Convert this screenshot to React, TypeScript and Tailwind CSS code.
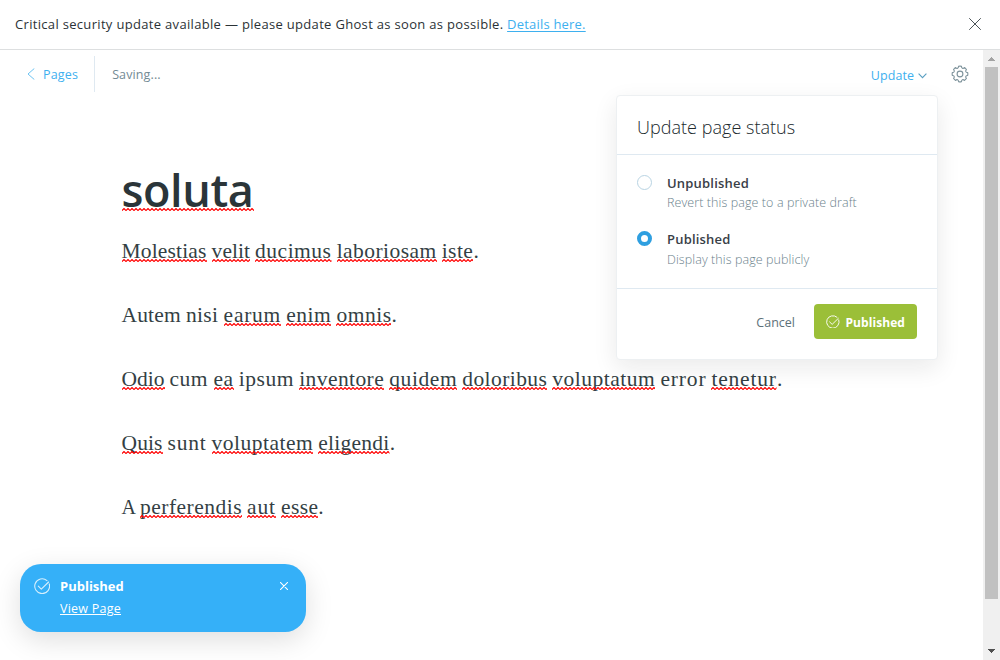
type Word = { text: string; cls: string; ok?: boolean; stop?: boolean };

const paragraphs: Word[][] = [
  [
    { text: "Molestias", cls: "w-[85px] tracking-[0.16px]" },
    { text: "velit", cls: "w-[38.5px] tracking-[0.08px]" },
    { text: "ducimus", cls: "w-[76.5px] tracking-[0.5px]" },
    { text: "laboriosam", cls: "w-[100px] tracking-[0.45px]" },
    { text: "iste", cls: "w-[31.7px] tracking-[0.45px]", stop: true },
  ],
  [
    { text: "Autem", cls: "w-[59.5px] tracking-[0.15px]", ok: true },
    { text: "nisi", cls: "w-[32.5px] tracking-[0.3px]", ok: true },
    { text: "earum", cls: "w-[57.5px] tracking-[0.75px]" },
    { text: "enim", cls: "w-[45.3px] tracking-[0.55px]" },
    { text: "omnis", cls: "w-[55px] tracking-[0.5px]", stop: true },
  ],
  [
    { text: "Odio", cls: "w-[43px]" },
    { text: "cum", cls: "w-[39px] tracking-[0.5px]", ok: true },
    { text: "ea", cls: "w-[20px] tracking-[0.45px]" },
    { text: "ipsum", cls: "w-[55.5px] tracking-[0.55px]", ok: true },
    { text: "inventore", cls: "w-[85px] tracking-[0.42px]" },
    { text: "quidem", cls: "w-[68px] tracking-[0.58px]" },
    { text: "doloribus", cls: "w-[85px] tracking-[0.42px]" },
    { text: "voluptatum", cls: "w-[103px] tracking-[0.5px]" },
    { text: "error", cls: "w-[46px] tracking-[0.85px]", ok: true },
    { text: "tenetur", cls: "w-[65.5px] tracking-[0.8px]", stop: true },
  ],
  [
    { text: "Quis", cls: "w-[41px] tracking-[0.1px]" },
    { text: "sunt", cls: "w-[39px] tracking-[0.8px]", ok: true },
    { text: "voluptatem", cls: "w-[101.5px] tracking-[0.48px]" },
    { text: "eligendi", cls: "w-[71.5px] tracking-[0.27px]", stop: true },
  ],
  [
    { text: "A", cls: "w-[13.4px] text-[20px]", ok: true },
    { text: "perferendis", cls: "w-[102px] tracking-[0.5px]" },
    { text: "aut", cls: "w-[29px] tracking-[0.9px]" },
    { text: "esse", cls: "w-[37.3px] tracking-[0.4px]", stop: true },
  ],
];

function Squiggle({ className }: { className: string }) {
  return (
    <svg className={`absolute left-0 h-[3px] w-full ${className}`} aria-hidden="true">
      <defs>
        <pattern id="squiggle" width="4" height="3" patternUnits="userSpaceOnUse">
          <path d="M-1 1.5L0 2.5L2 .5L4 2.5L5 1.5" fill="none" stroke="#ff0000" strokeWidth="1.15" />
        </pattern>
      </defs>
      <rect width="100%" height="3" fill="url(#squiggle)" />
    </svg>
  );
}

function Cross({ className, width }: { className: string; width: number }) {
  return (
    <svg viewBox="0 0 12 12" className={className} fill="none" stroke="currentColor" strokeWidth={width} strokeLinecap="round">
      <path d="M.5.5l11 11M11.5.5l-11 11" />
    </svg>
  );
}

function CheckCircle({ className }: { className: string }) {
  return (
    <svg viewBox="0 0 16 16" className={className} fill="none" stroke="currentColor" strokeWidth="1.1" strokeLinecap="round" strokeLinejoin="round">
      <path d="M15.2 5.9A7.4 7.4 0 1 1 13 2.6" />
      <path d="M4.3 8.2l3 2.9L14.6 4" />
    </svg>
  );
}

function cogPath() {
  const at = (deg: number, r: number) => {
    const a = (deg * Math.PI) / 180;
    return `${(9 + r * Math.sin(a)).toFixed(2)} ${(9 - r * Math.cos(a)).toFixed(2)}`;
  };
  let d = `M${at(-11, 7.8)}`;
  for (let k = 0; k < 8; k++) {
    const t = k * 45;
    d += `Q${at(t, 8.1)} ${at(t + 11, 7.8)}C${at(t + 13, 5.9)} ${at(t + 32, 5.9)} ${at(t + 34, 7.8)}`;
  }
  return d + "Z";
}

function Cog() {
  return (
    <svg viewBox="0 0 18 18" className="size-[18px] text-[#7d929b]" fill="none" stroke="currentColor" strokeWidth="1.1">
      <path d={cogPath()} strokeLinejoin="round" />
      <circle cx="9" cy="9" r="2.9" />
    </svg>
  );
}

function Option({ title, note, checked }: { title: string; note: string; checked?: boolean }) {
  return (
    <div className="flex gap-[15px]">
      <span
        className={
          checked
            ? "size-[15px] shrink-0 rounded-full border-[4px] border-[#2f9fe0] bg-white"
            : "size-[15px] shrink-0 rounded-full border border-[#b9d4e3] bg-white"
        }
      />
      <div>
        <div className="text-[13px] leading-[16px] font-semibold tracking-[0.2px] text-[#394047]">{title}</div>
        <div className={`text-[12.5px] leading-[20px] font-light tracking-[0.09px] text-[#6b828c] ${checked ? "mt-[3px]" : "mt-[2px]"}`}>
          {note}
        </div>
      </div>
    </div>
  );
}

function PublishMenu() {
  return (
    <section className="absolute top-[45px] left-[616px] h-[265px] w-[322px] rounded-[4px] border border-[#edf0f2] bg-white shadow-[0_8px_24px_rgba(21,23,26,0.09)]">
      <h2 className="h-[59px] border-b border-[#dfe9f1] pt-[18px] pl-5 text-[18px] leading-[27px] font-light tracking-[0.03px] text-[#20292d]">
        Update page status
      </h2>
      <div className="flex h-[134px] flex-col gap-[18px] border-b border-[#dfe9f1] pt-[20px] pl-5">
        <Option title="Unpublished" note="Revert this page to a private draft" />
        <Option title="Published" note="Display this page publicly" checked />
      </div>
      <footer className="flex items-center justify-end gap-[19px] pt-[15px] pr-5">
        <button className="pt-[3px] text-[12.5px] text-[#5d7179]">Cancel</button>
        <button className="flex h-[35px] w-[103px] items-center rounded-[4px] bg-[#9bbf38] pl-3 text-[12px] font-bold text-white">
          <CheckCircle className="mr-[6px] size-[13.5px]" />
          <span className="pt-[2px] tracking-[0.07px]">Published</span>
        </button>
      </footer>
    </section>
  );
}

function Toast() {
  return (
    <aside className="absolute top-[514px] left-5 flex h-[68px] w-[286px] rounded-[21px] bg-[#35b0f8] pt-[13px] pr-[18px] pl-[14px] text-white shadow-[0_8px_28px_rgba(0,0,0,0.13)]">
      <CheckCircle className="mt-px size-4 opacity-80" />
      <div className="ml-[10px] grow">
        <div className="text-[13px] leading-[19px] font-bold">Published</div>
        <a className="mt-[3px] block text-[12.5px] leading-[19px] tracking-[0.24px] underline underline-offset-1">View Page</a>
      </div>
      <Cross className="mt-[5px] size-[8px]" width={1.6} />
    </aside>
  );
}

function Scrollbar() {
  return (
    <div className="flex w-[17px] flex-col items-center bg-[#f0f0f0]">
      <svg viewBox="0 0 17 17" className="size-[17px]" shapeRendering="crispEdges">
        <path d="M5 11h7L8.5 7z" fill="#a3a3a3" />
      </svg>
      <div className="mr-px h-[532px] w-[13px] bg-[#c1c1c1]" />
      <svg viewBox="0 0 17 17" className="mt-auto size-[17px]" shapeRendering="crispEdges">
        <path d="M5 6h7L8.5 10z" fill="#505050" />
      </svg>
    </div>
  );
}

export default function App() {
  return (
    <div className="flex h-[660px] w-[1000px] flex-col overflow-hidden bg-white font-['Open_Sans','Noto_Sans',sans-serif] text-[#2b3236]">
      <div className="flex h-[50px] items-center justify-between border-b border-[#dddfe0] pr-[19px] pb-[2px] pl-[15px]">
        <p className="text-[13px] leading-5 tracking-[0.32px]">
          Critical security update available — please update Ghost as soon as possible.{" "}
          <a className="tracking-[0.2px] text-[#3eb0ef] underline underline-offset-2">Details here.</a>
        </p>
        <Cross className="size-3 text-[#4a5357]" width={1} />
      </div>

      <div className="flex min-h-0 grow">
        <main className="relative w-[983px]">
          <header className="flex h-[48px] items-center pr-[14px] pl-[27px]">
            <svg viewBox="0 0 8 12" className="h-3 w-2 text-[#6cc3f2]" fill="none" stroke="currentColor">
              <path d="M7.3.5L1 6l6.3 5.5" />
            </svg>
            <a className="ml-2 pt-[2px] text-[12.5px] tracking-[0.18px] text-[#3eb0ef]">Pages</a>
            <span className="ml-[16px] h-9 w-px bg-[#dfe9f1]" />
            <span className="ml-[17px] pt-[2px] text-[12.5px] tracking-[0.12px] text-[#738a94]">Saving...</span>
            <button className="mt-[4px] ml-auto flex items-center text-[12.5px] tracking-[0.05px] text-[#3eb0ef]">
              Update
              <svg viewBox="0 0 9 6" className="ml-1 h-[6px] w-[9px] text-[#5a9fc2]" fill="none" stroke="currentColor" strokeWidth="1.1">
                <path d="M.6.7l3.9 4L8.4.7" />
              </svg>
            </button>
            <span className="ml-6">
              <Cog />
            </span>
          </header>

          <article className="pt-[60px] pl-[121.5px]">
            <h1 className="relative h-[64px] w-[132px] text-[45px] leading-[63px] font-semibold tracking-[-0.4px] text-[#2b3539]">
              soluta
              <Squiggle className="top-[50px]" />
            </h1>
            <div className="mt-[13px] flex flex-col gap-8 font-['Liberation_Serif',serif] text-[21.5px] leading-8 text-[#343f44]">
              {paragraphs.map((line, i) => (
                <p key={i} className="flex gap-[5.05px]">
                  {line.map((w) => (
                    <span key={w.text} className="flex whitespace-nowrap">
                      <span className={`relative block ${w.cls}`}>
                        {w.text}
                        {!w.ok && <Squiggle className="top-[24px]" />}
                      </span>
                      {w.stop && "."}
                    </span>
                  ))}
                </p>
              ))}
            </div>
          </article>

          <PublishMenu />
          <Toast />
        </main>
        <Scrollbar />
      </div>
    </div>
  );
}
